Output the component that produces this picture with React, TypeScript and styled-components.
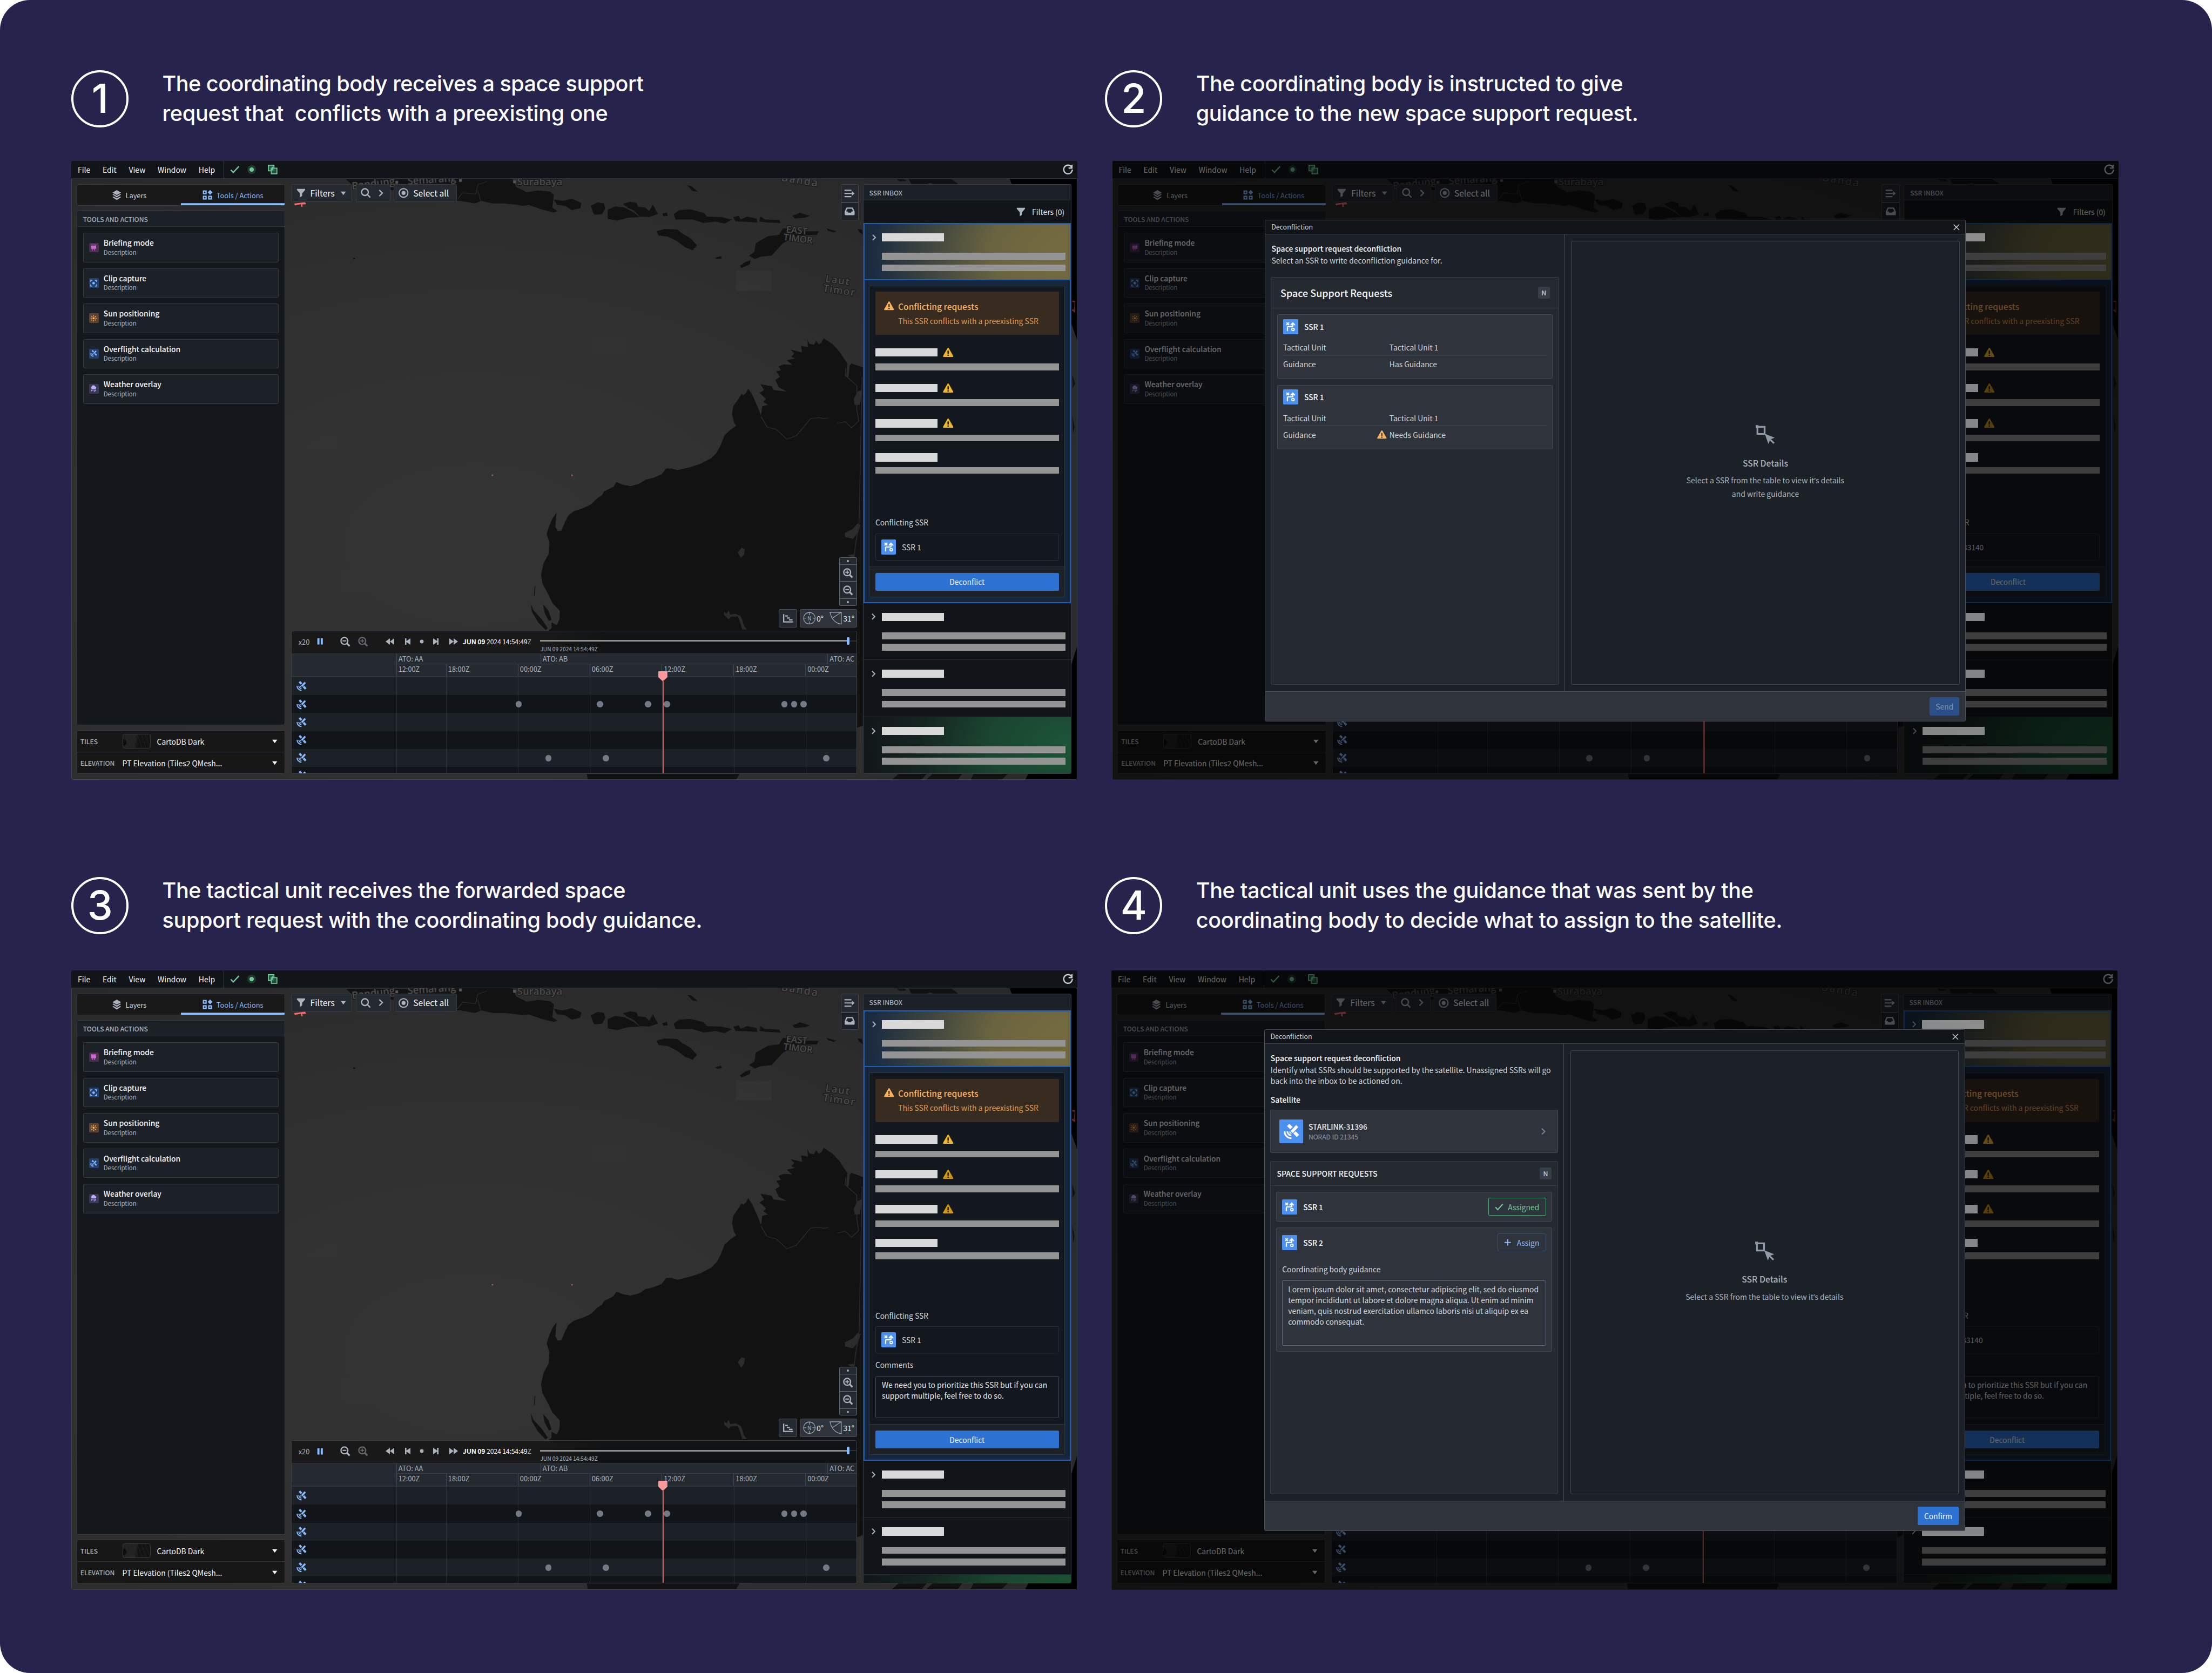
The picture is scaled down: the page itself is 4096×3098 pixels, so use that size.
import React from "react";
import styled, { createGlobalStyle, css } from "styled-components";

const SANS = '"Noto Sans CJK SC", "Noto Sans", sans-serif';
const DISPLAY = 'Inter, "Liberation Sans", sans-serif';

const Global = createGlobalStyle`
  html, body { margin: 0; padding: 0; background: #ffffff; }
  * { box-sizing: border-box; }
`;

/* ---------- Page ---------- */

const Page = styled.main`
  zoom: 0.84176;
  width: 4866px;
  height: 3680px;
  overflow: hidden;
  border-radius: 66px;
  background: #26244c;
  font-family: ${SANS};
  color: #f6f7f9;
  padding: 154px 0 0 157px;
  display: grid;
  grid-template-columns: 2213px 2213px;
  grid-template-rows: 1562px 1568px;
  column-gap: 77px;
  row-gap: 213px;
`;

const Step = styled.section<{ $nudge?: number }>`
  display: flex;
  flex-direction: column;
  justify-content: space-between;
  margin-left: ${(p) => p.$nudge ?? 0}px;
  width: 2213px;
`;

const StepHeader = styled.header<{ $shift?: number }>`
  display: flex;
  align-items: flex-start;
  gap: 74px;
  margin-left: ${(p) => p.$shift ?? 0}px;
`;

const StepNumber = styled.div`
  width: 126px;
  height: 126px;
  border: 5px solid #ffffff;
  border-radius: 50%;
  display: flex;
  align-items: center;
  justify-content: center;
  font: 500 89px/1 ${DISPLAY};
  color: #ffffff;
`;

const StepTitle = styled.h2`
  margin: -2px 0 0;
  font: 500 47px/65.3px ${DISPLAY};
  color: #ffffff;
  white-space: pre;
`;

const TitleLine = styled.span<{ $spacing: number }>`
  display: block;
  letter-spacing: ${(p) => p.$spacing}px;
`;

/* ---------- Window ---------- */

const Window = styled.div`
  position: relative;
  isolation: isolate;
  width: 2213px;
  height: 1362px;
  display: flex;
  flex-direction: column;
  overflow: hidden;
  border-radius: 4px;
  background: #000000;
  &::after {
    content: "";
    position: absolute;
    inset: 0;
    border: 1px solid rgba(90, 95, 105, 0.55);
    border-radius: 4px;
    pointer-events: none;
  }
`;

const MenuBar = styled.nav`
  position: relative;
  z-index: 1;
  height: 39px;
  flex: none;
  display: flex;
  align-items: center;
  background: #111418;
  border-bottom: 1.5px solid #2f343c;
  padding: 0 9px 0 14px;
  font-size: 16.6px;
`;

const MenuItems = styled.div`
  display: flex;
  gap: 27px;
  height: 100%;
  align-items: center;
  width: 322px;
  border-right: 1.5px solid #383e47;
`;

const StatusIcons = styled.div`
  display: flex;
  align-items: center;
  margin-left: 13px;
  color: #72ca9b;
`;

const LiveDot = styled.i`
  width: 19px;
  height: 19px;
  margin: 0 26px 0 17px;
  border-radius: 50%;
  background: radial-gradient(circle, #72ca9b 0 4.4px, #1f3b31 5px);
`;

const Push = styled.span`
  margin-left: auto;
  display: flex;
`;

const Refresh = styled(Push)`
  color: #c5cbd3;
`;

const Body = styled.div`
  position: relative;
  flex: 1;
  min-height: 0;
  display: flex;
  padding: 12.5px 13px 13.5px 11.5px;
`;

const MapCanvas = styled.svg`
  position: absolute;
  left: 0;
  top: -39px;
  width: 2213px;
  height: 1362px;
`;

const frame = css`
  border: 1.4px solid #383e47;
  border-radius: 3px;
`;

/* ---------- Left column ---------- */

const LeftColumn = styled.aside`
  position: relative;
  width: 459px;
  flex: none;
  display: flex;
  flex-direction: column;
  gap: 11px;
`;

const Tabs = styled.div`
  ${frame}
  height: 47px;
  display: flex;
  background: #191919;
  overflow: hidden;
`;

const Tab = styled.div<{ $active?: boolean }>`
  flex: 1;
  display: flex;
  align-items: center;
  justify-content: center;
  gap: 9px;
  font-size: 15.2px;
  color: ${(p) => (p.$active ? "#8abbff" : "#d3d8de")};
  box-shadow: ${(p) => (p.$active ? "inset 0 -4.5px 0 #8abbff" : "none")};
  svg { color: ${(p) => (p.$active ? "#8abbff" : "#abb3bf")}; }
`;

const ToolsPanel = styled.section`
  ${frame}
  flex: 1;
  background: #14171b;
`;

const PanelTitle = styled.h3`
  margin: 0;
  height: 34.5px;
  flex: none;
  padding: 0 13px;
  display: flex;
  align-items: center;
  background: #1c2127;
  border-bottom: 1.5px solid #2f343c;
  font-size: 14.3px;
  font-weight: 500;
  color: #abb3bf;
`;

const ToolList = styled.div`
  padding: 13px;
  display: flex;
  flex-direction: column;
  gap: 13px;
`;

const ToolCard = styled.div`
  ${frame}
  height: 64.8px;
  background: #1c2127;
  display: flex;
  align-items: center;
  padding-left: 12px;
  gap: 11px;
`;

const ToolTile = styled.span<{ $bg: string; $fg: string }>`
  width: 21px;
  height: 21px;
  border-radius: 2px;
  display: flex;
  align-items: center;
  justify-content: center;
  background: ${(p) => p.$bg};
  color: ${(p) => p.$fg};
`;

const ToolText = styled.div`
  display: flex;
  flex-direction: column;
`;

const ToolName = styled.b`
  font-size: 16.4px;
  line-height: 21px;
  font-weight: 500;
  color: #f6f7f9;
`;

const ToolNote = styled.span`
  font-size: 13.5px;
  line-height: 20px;
  color: #abb3bf;
`;

const Selects = styled.div`
  ${frame}
  height: 96px;
  background: #171717;
  display: flex;
  flex-direction: column;
`;

const SelectRow = styled.div`
  flex: 1;
  display: flex;
  align-items: center;
  padding: 0 14px 0 7px;
  font-size: 16.5px;
  & + & { border-top: 1.5px solid #2f343c; }
`;

const SelectLabel = styled.span`
  width: 92.5px;
  font-size: 14.3px;
  font-weight: 500;
  color: #abb3bf;
`;

const TileThumb = styled.i`
  width: 62px;
  height: 32px;
  margin-right: 14px;
  border: 1.4px solid #35383c;
  border-radius: 4px;
  background:
    radial-gradient(circle at 0 60%, #0e0e0e 7px, transparent 8px),
    repeating-linear-gradient(70deg, transparent 0 7px, rgba(40,40,40,.7) 7px 8px),
    linear-gradient(100deg, #222 45%, #131313 55%);
`;

/* ---------- Middle column ---------- */

const MiddleColumn = styled.div`
  position: relative;
  width: 1248.5px;
  flex: none;
  margin: 0 9px 0 13px;
  display: flex;
  flex-direction: column;
`;

const MapTop = styled.div`
  display: flex;
  align-items: flex-start;
  gap: 7.5px;
  flex: 1;
`;

const MapButton = styled.div<{ $w: number }>`
  ${frame}
  width: ${(p) => p.$w}px;
  height: 39px;
  background: #252a31;
  display: flex;
  align-items: center;
  padding-left: 10px;
  font-size: 18.6px;
  color: #f6f7f9;
  svg { color: #abb3bf; }
`;

const Gap = styled.i<{ $w: number }>`
  width: ${(p) => p.$w}px;
  flex: none;
`;

const Stack = styled.div<{ $w: number; $line?: string }>`
  border: 1.4px solid ${(p) => p.$line ?? "#404854"};
  border-radius: 3px;
  width: ${(p) => p.$w}px;
  display: flex;
  flex-direction: column;
  background: #252a31;
  color: #abb3bf;
`;

const StackCell = styled.div<{ $h: number; $line?: string; $dark?: boolean }>`
  height: ${(p) => p.$h}px;
  display: flex;
  align-items: center;
  justify-content: center;
  background: ${(p) => (p.$dark ? "#1c2127" : "transparent")};
  & + & { border-top: 1.4px solid ${(p) => p.$line ?? "#404854"}; }
`;

const Speck = styled.i`
  width: 4.5px;
  height: 4.5px;
  border-radius: 50%;
  background: #abb3bf;
`;

const ViewControls = styled.div<{ $my: number }>`
  display: flex;
  justify-content: flex-end;
  gap: 6.5px;
  margin: ${(p) => p.$my}px 4px ${(p) => p.$my}px 0;
`;

const ViewBox = styled.div<{ $w: number; $bg: string }>`
  border: 1.4px solid #4a505b;
  border-radius: 3px;
  width: ${(p) => p.$w}px;
  height: 40px;
  background: ${(p) => p.$bg};
  display: flex;
  align-items: center;
  color: #abb3bf;
  padding-left: 5px;
  font-size: 16.8px;
  span { color: #e5e8eb; }
`;

/* ---------- Timeline ---------- */

const Timeline = styled.section`
  width: 1244.5px;
  height: 315.5px;
  border: 1.4px solid #383e47;
  border-radius: 3px 3px 0 0;
  overflow: hidden;
  display: flex;
  flex-direction: column;
`;

const Playback = styled.div`
  height: 49px;
  flex: none;
  display: flex;
  align-items: center;
  padding: 0 0 2.5px 15px;
  background: linear-gradient(90deg, #191919 45%, #121314 55%);
  color: #abb3bf;
  font-size: 15.2px;
`;

const Tint = styled.span<{ $c?: string; $fade?: number }>`
  display: flex;
  color: ${(p) => p.$c ?? "inherit"};
  opacity: ${(p) => p.$fade ?? 1};
`;

const Clock = styled.span`
  width: 170.5px;
  flex: none;
  color: #f6f7f9;
  font-size: 14.6px;
  white-space: nowrap;
  letter-spacing: -0.2px;
  b { font-weight: 700; }
  i { font-style: normal; color: #abb3bf; }
`;

const Scrubber = styled.div`
  flex: 1;
  display: flex;
  flex-direction: column;
  padding-top: 14px;
  small { font-size: 12.1px; line-height: 16px; margin-top: 1px; }
`;

const Rail = styled.div`
  height: 17px;
  display: flex;
  align-items: center;
`;

const RailFill = styled.i`
  width: 674px;
  height: 3.6px;
  background: #8f8f8f;
`;

const RailThumb = styled.i`
  width: 6px;
  height: 17px;
  border-radius: 2px;
  background: #8abbff;
`;

const RailRest = styled.i`
  flex: 1;
  height: 3px;
  background: #2b2d30;
`;

const Lanes = styled.div`
  position: relative;
  flex: 1;
  min-height: 0;
`;

const LaneHead = styled.div`
  display: flex;
  height: 52.5px;
  background: #252a31;
  border-top: 1.5px solid #2f343c;
  border-bottom: 2.4px solid #2f343c;
  font-size: 15.2px;
  line-height: 22px;
  color: #abb3bf;
`;

const LaneHeadLabel = styled.div`
  width: 230px;
  flex: none;
`;

const LaneScale = styled.div`
  flex: 1;
  display: flex;
  flex-direction: column;
`;

const ScaleRow = styled.div<{ $h: number }>`
  display: flex;
  height: ${(p) => p.$h}px;
  & + & { border-top: 1.4px solid #383e47; }
`;

const ScaleCell = styled.div<{ $w: number }>`
  width: ${(p) => p.$w}px;
  flex: none;
  padding-left: 3.5px;
  border-left: 1.3px solid #434852;
`;

const Lane = styled.div<{ $alt?: boolean }>`
  height: 39.5px;
  display: flex;
  align-items: center;
  padding-left: 10px;
  color: #8abbff;
  background: ${(p) => (p.$alt ? "#111418" : "#1c2127")};
`;

const GridLine = styled.i`
  position: absolute;
  top: 52px;
  bottom: 0;
  width: 1.3px;
  background: rgba(95, 100, 110, 0.3);
`;

const Pass = styled.i`
  position: absolute;
  width: 13.6px;
  height: 13.6px;
  margin: -6.8px 0 0 -6.8px;
  border-radius: 50%;
  background: #747a85;
`;

const Playhead = styled.div`
  position: absolute;
  left: 807px;
  top: 39px;
  bottom: 0;
  width: 20px;
  display: flex;
  flex-direction: column;
  align-items: center;
  color: #fa999c;
  &::after {
    content: "";
    flex: 1;
    width: 2.5px;
    background: #cd5f62;
  }
`;

/* ---------- Inbox ---------- */

const Inbox = styled.aside`
  ${frame}
  position: relative;
  width: 459px;
  flex: none;
  display: flex;
  flex-direction: column;
  overflow: hidden;
  background: #111418;
`;

const InboxFilter = styled.div`
  height: 49.8px;
  flex: none;
  display: flex;
  align-items: center;
  justify-content: flex-end;
  gap: 15px;
  padding-right: 14px;
  font-size: 16.5px;
  color: #e5e8eb;
  svg { color: #abb3bf; }
`;

const RequestItem = styled.div<{ $tone?: "gold" | "green" }>`
  height: 125.4px;
  flex: none;
  display: flex;
  flex-direction: column;
  padding: 21px 12px 0 15px;
  color: #abb3bf;
  border-bottom: 1.5px solid #252a31;
  ${(p) =>
    p.$tone === "gold" &&
    css`
      padding: 20px 10px 0 13px;
      border: 2.4px solid #215db0;
      background: radial-gradient(ellipse 460px 300px at 100% 50%, #736a40 10%, #6a643f 38%, #3c443f 70%, #1a2b42 96%);
    `}
  ${(p) =>
    p.$tone === "green" &&
    css`background: radial-gradient(ellipse 460px 300px at 100% 50%, #1c5235 8%, #1a4530 40%, #152621 72%, #12181a 96%);`}
`;

const ItemHead = styled.div`
  display: flex;
  align-items: center;
  gap: 9.5px;
`;

const Bar = styled.i<{ $soft?: boolean; $ml?: number; $mt?: number; $lit?: boolean }>`
  display: block;
  flex: none;
  width: ${(p) => (p.$soft ? "auto" : "136.5px")};
  height: ${(p) => (p.$soft ? 15.2 : 18.2)}px;
  margin: ${(p) => p.$mt ?? 0}px 0 0 ${(p) => p.$ml ?? 0}px;
  background: ${(p) => (p.$soft ? "#949494" : "#d9d9d9")};
  ${(p) =>
    p.$lit &&
    css`
      position: relative;
      z-index: 3;
      opacity: 0.6;
    `}
`;

const Expanded = styled.div`
  flex: none;
  margin-top: -2.4px;
  background: #16273d;
  border: 2.4px solid #215db0;
  padding: 12px 10.5px 10.5px;
`;

const Detail = styled.div`
  border: 1.4px solid #2c3a4c;
  border-radius: 3px;
  background: #13181f;
`;

const DetailBody = styled.div`
  padding: 12.5px 12.5px 13px;
  display: flex;
  flex-direction: column;
`;

const Callout = styled.div`
  height: 95px;
  border-radius: 2px;
  background: #382b20;
  color: #fbb360;
  display: flex;
  gap: 9px;
  padding: 20px 0 0 19px;
`;

const CalloutText = styled.div`
  display: flex;
  flex-direction: column;
  b { font-size: 18.5px; line-height: 26px; font-weight: 500; }
  span { font-size: 16.6px; line-height: 36px; color: #e09c52; white-space: nowrap; }
`;

const FieldHead = styled.div<{ $mt: number }>`
  display: flex;
  align-items: center;
  gap: 12px;
  height: 18px;
  margin-top: ${(p) => p.$mt}px;
`;

const Label = styled.span<{ $mt: number }>`
  margin-top: ${(p) => p.$mt}px;
  font-size: 16.4px;
  line-height: 24px;
  color: #d3d8de;
`;

const BoxedRow = styled.div`
  height: 59.5px;
  margin-top: 12.5px;
  border: 1.4px solid #2a2f37;
  border-radius: 3px;
  display: flex;
  align-items: center;
  gap: 12.5px;
  padding-left: 11.5px;
  font-size: 16.4px;
  color: #d3d8de;
`;

const Comment = styled.p`
  margin: 12.5px 0 0;
  height: 93px;
  border: 1.4px solid #404854;
  border-radius: 3px;
  padding: 7.5px 13px;
  font-size: 16.5px;
  line-height: 23.6px;
  color: #e5e8eb;
  white-space: pre;
`;

const DetailFoot = styled.div`
  height: 66.5px;
  border-top: 1.5px solid #2f343c;
  background: #1c2127;
  padding: 12.5px 12.5px 0;
`;

const Primary = styled.div<{ $w?: number; $muted?: boolean }>`
  width: ${(p) => (p.$w ? p.$w + "px" : "100%")};
  height: 40px;
  border-radius: 3px;
  display: flex;
  align-items: center;
  justify-content: center;
  font-size: 16.4px;
  background: ${(p) => (p.$muted ? "#2b4f87" : "#2d72d2")};
  color: ${(p) => (p.$muted ? "#8494ad" : "#f6f7f9")};
`;

/* ---------- Dialog ---------- */

const Scrim = styled.div`
  position: absolute;
  z-index: 2;
  inset: 0;
  background: rgba(0, 0, 0, 0.58);
`;

const Dialog = styled.div`
  position: absolute;
  z-index: 4;
  left: 335.5px;
  top: 129px;
  width: 1542px;
  height: 1104.5px;
  display: flex;
  flex-direction: column;
  border: 1.4px solid #4a4f58;
  border-radius: 3px;
  background: #1c2127;
  overflow: hidden;
`;

const DialogTitle = styled.div`
  height: 31.5px;
  flex: none;
  display: flex;
  align-items: center;
  justify-content: space-between;
  padding: 0 12px 0 13px;
  background: #111418;
  border-bottom: 1.5px solid #404854;
  font-size: 14.8px;
  color: #d3d8de;
`;

const DialogMain = styled.div`
  flex: 1;
  min-height: 0;
  display: flex;
`;

const DialogLeft = styled.div`
  width: 658.5px;
  flex: none;
  border-right: 1.4px solid #404854;
  padding: 18.5px 11.5px 14px 12px;
  display: flex;
  flex-direction: column;
`;

const Lead = styled.b<{ $mt?: number }>`
  margin: ${(p) => p.$mt ?? 0}px 0 0 1.5px;
  font-size: 16.6px;
  font-weight: 500;
  line-height: 26px;
`;

const Copy = styled.span`
  margin-left: 1.5px;
  font-size: 16.55px;
  line-height: 24px;
  color: #d3d8de;
  white-space: pre;
`;

const Well = styled.div<{ $mt: number }>`
  border: 1.4px solid #383e47;
  border-radius: 3px;
  margin-top: ${(p) => p.$mt}px;
  flex: 1;
  background: #252a31;
`;

const WellHead = styled.div<{ $h: number; $size: number; $pl: number; $pr: number }>`
  height: ${(p) => p.$h}px;
  padding: 0 ${(p) => p.$pr}px 0 ${(p) => p.$pl}px;
  border-bottom: 1.5px solid #383e47;
  display: flex;
  align-items: center;
  justify-content: space-between;
  font-size: ${(p) => p.$size}px;
  font-weight: 500;
`;

const Badge = styled.span`
  width: 26.5px;
  height: 26.5px;
  border-radius: 3px;
  background: #383e47;
  display: flex;
  align-items: center;
  justify-content: center;
  font-size: 14.6px;
  font-weight: 500;
  color: #c5cbd3;
`;

const WellBody = styled.div`
  padding: 14px 12.5px;
  display: flex;
  flex-direction: column;
  gap: 13.5px;
`;

const SsrCard = styled.div<{ $h: number; $pad?: number }>`
  border: 1.4px solid #454b55;
  border-radius: 3px;
  height: ${(p) => p.$h}px;
  padding: ${(p) => p.$pad ?? 9}px 12px 0;
  background: #2f343c;
  display: flex;
  flex-direction: column;
`;

const SsrHead = styled.div`
  display: flex;
  align-items: center;
  gap: 13.5px;
  font-size: 16.4px;
  font-weight: 500;
`;

const PropRow = styled.div<{ $last?: boolean }>`
  display: flex;
  height: ${(p) => (p.$last ? 38 : 34)}px;
  align-items: center;
  font-size: 16.4px;
  color: #d3d8de;
  border-bottom: ${(p) => (p.$last ? "none" : "1.5px solid #4d535d")};
`;

const PropName = styled.span`
  width: 206.5px;
`;

const PropFlag = styled.span`
  width: 27.5px;
  display: flex;
`;

const Props = styled.div`
  margin-top: 13px;
`;

const Satellite = styled.div`
  height: 95px;
  margin-top: 8px;
  border: 1.4px solid #404854;
  border-radius: 3px;
  background: #2f343c;
  display: flex;
  align-items: center;
  padding: 0 22px 0 20px;
  gap: 11.5px;
  color: #738091;
`;

const SatelliteText = styled.div`
  flex: 1;
  display: flex;
  flex-direction: column;
  b { font-size: 16.5px; line-height: 24px; font-weight: 500; color: #e5e8eb; }
  span { font-size: 14.4px; line-height: 21px; color: #8f99a8; }
`;

const Outline = styled.span<{ $w: number; $fg: string; $line: string; $gap: number }>`
  margin-left: auto;
  width: ${(p) => p.$w}px;
  height: 39px;
  border: 1.4px solid ${(p) => p.$line};
  border-radius: 2px;
  display: flex;
  align-items: center;
  justify-content: center;
  gap: ${(p) => p.$gap}px;
  font-weight: 400;
  color: ${(p) => p.$fg};
`;

const Guidance = styled.p`
  margin: 12.5px 0 0;
  height: 144.5px;
  border: 1.4px solid #5f6b7c;
  border-radius: 3px;
  padding: 8px 12px;
  font-size: 16.5px;
  line-height: 23.7px;
  color: #d3d8de;
  white-space: pre;
`;

const DialogRight = styled.div`
  flex: 1;
  padding: 14px 12.5px 14px 14px;
  display: flex;
`;

const EmptyState = styled.div`
  flex: 1;
  border: 1.4px solid #404854;
  border-radius: 3px;
  display: flex;
  flex-direction: column;
  align-items: center;
  justify-content: center;
  color: #8f99a8;
  b { font-size: 18.7px; line-height: 28px; font-weight: 500; margin: 28px 0 9px; color: #abb3bf; }
`;

const EmptyNote = styled.span`
  font-size: 16.6px;
  line-height: 28.6px;
  color: #abb3bf;
  text-align: center;
  white-space: pre;
`;

const Apostrophe = styled.span`
  font-family: "Noto Sans", sans-serif;
`;

const DialogFoot = styled.div`
  height: 66px;
  flex: none;
  background: #2f343c;
  border-top: 1.5px solid #4a4f58;
  display: flex;
  align-items: center;
  justify-content: flex-end;
  padding-right: 13px;
`;

const BlueTile = styled.span<{ $s: number }>`
  width: ${(p) => p.$s}px;
  height: ${(p) => p.$s}px;
  flex: none;
  border-radius: 2px;
  background: #4c90f0;
  color: #ffffff;
  display: flex;
  align-items: center;
  justify-content: center;
`;

/* ---------- Icons (16 unit grid) ---------- */

const Glyph = styled.svg<{ $s: number }>`
  width: ${(p) => p.$s}px;
  height: ${(p) => p.$s}px;
  flex: none;
  display: block;
  fill: currentColor;
`;

type IconName =
  | "layers" | "grid" | "filter" | "caret" | "search" | "zoomIn" | "zoomOut" | "chevron"
  | "target" | "menuOpen" | "inbox" | "refresh" | "tick" | "link" | "pause" | "rewind"
  | "prev" | "next" | "forward" | "dot" | "gantt" | "warn" | "route" | "satellite"
  | "board" | "capture" | "sun" | "rain" | "cross" | "plus" | "pick" | "marker";

const line = (w: number) => ({ fill: "none", stroke: "currentColor", strokeWidth: w });

const shapes: Record<IconName, React.ReactNode> = {
  layers: (
    <>
      <path d="M8 0 15 4 8 8 1 4z" />
      <path d="M1 7.2 2.8 6.3 8 9.2l5.2-2.9 1.8.9L8 11.9z" />
      <path d="M1 11.2l1.8-.9L8 13.2l5.2-2.9 1.8.9L8 15.9z" />
    </>
  ),
  grid: (
    <>
      <g {...line(2)}>
        <rect x="1.5" y="1.5" width="4.2" height="4.2" />
        <rect x="1.5" y="10" width="4.2" height="4.2" />
        <rect x="10" y="10" width="4.2" height="4.2" />
      </g>
      <path d="M12.1-.3 15.9 3.6 12.1 7.5 8.3 3.6z" />
    </>
  ),
  filter: <path d="M.8.8h14.4v1.8L10 8.6V13l-4 2.6V8.6L.8 2.6z" />,
  caret: <path d="M2.5 4.5h11L8 12.3z" />,
  search: <g {...line(2)}><circle cx="6.7" cy="6.7" r="5.4" /><path d="M10.8 10.8 15.2 15.2" /></g>,
  zoomIn: <g {...line(2)}><circle cx="6.7" cy="6.7" r="5.5" /><path d="M10.8 10.8 15 15" strokeWidth="2.8" /><path d="M3.7 6.7h6M6.7 3.7v6" strokeWidth="1.7" /></g>,
  zoomOut: <g {...line(2)}><circle cx="6.7" cy="6.7" r="5.5" /><path d="M10.8 10.8 15 15" strokeWidth="2.8" /><path d="M3.7 6.7h6" strokeWidth="1.8" /></g>,
  chevron: <path d="M4.6 2 10.6 8 4.6 14" {...line(2.4)} />,
  target: <><circle cx="8" cy="8" r="7" {...line(1.7)} /><circle cx="8" cy="8" r="3.2" /></>,
  menuOpen: <><path d="M.5 3h9.6M.5 8H11M.5 13h9.6" {...line(1.9)} strokeLinecap="round" /><path d="M11.6 4.3 16 8l-4.4 3.7z" /></>,
  inbox: <path fillRule="evenodd" d="M3.6 2h8.8q.8 0 1.1.8L16 8.6V13q0 1.2-1.2 1.2H1.2Q0 14.2 0 13V8.6L2.5 2.8Q2.8 2 3.6 2zM4.2 3.9 2.4 8.2h2.2l1.2 2h4.4l1.2-2h2.2l-1.8-4.3z" />,
  refresh: <><path d="M13.4 4.3A6.6 6.6 0 1 0 14.6 8.3" {...line(2)} /><path d="M14 .8v5.2H8.9" {...line(1.9)} /></>,
  tick: <path d="M1.2 8.6 5.4 13 14.8 2.8" {...line(2.1)} />,
  link: <><path d="M.8.8h9.4v9.4H.8z" fill="#245a43" stroke="currentColor" strokeWidth="1.6" /><path d="M5.8 5.8h9.4v9.4H5.8z" fill="#245a43" fillOpacity=".8" stroke="currentColor" strokeWidth="1.6" /><path d="M7.8 3.5v5H5" {...line(1.5)} /></>,
  pause: <path d="M2 1h4.6v14H2zM9.4 1H14v14H9.4z" />,
  rewind: <path d="M8 2v12L0 8zM16 2v12L8 8z" />,
  forward: <path d="M0 2v12l8-6zM8 2v12l8-6z" />,
  prev: <path d="M3 2h2.6v5L13 2v12L5.6 9v5H3z" />,
  next: <path d="M13 2h-2.6v5L3 2v12l7.4-5v5H13z" />,
  dot: <circle cx="8" cy="8" r="3.4" />,
  gantt: <path d="M0 1h2v11.5h14v2H0zM3.5 3h4.2v2H3.5zM6.2 6.2h4.6v2H6.2zM9.5 9.3h5.7v2H9.5z" />,
  warn: <path fillRule="evenodd" d="M8 .8q.6 0 .9.5l6.9 12.2q.5 1.2-.8 1.3H1q-1.3-.1-.8-1.3L7.1 1.3Q7.4.8 8 .8zM7 5.2v5h2v-5zM7 11.3v2h2v-2z" />,
  route: (
    <>
      <path d="M1 1.2 5.4 5.2M5.4 1.2 1 5.2" {...line(1.9)} />
      <path d="M2.7 15.2V9.3q0-1.2 1.2-1.2h6.3q1.5 0 1.5-1.5V2.5" {...line(2)} />
      <path d="M8.2 5.4 11.7 1.7 15.2 5.4" {...line(2)} />
      <circle cx="12" cy="12.6" r="2.1" {...line(1.7)} />
    </>
  ),
  satellite: (
    <>
      <path d="M8.3 8.6 14 2.3" {...line(3)} />
      <path d="M4.7 1.2 8 4.6" {...line(3.4)} />
      <path d="M11.2 8.8 14.8 12.6" {...line(3.4)} />
      <path d="M1 7.8A7 7 0 0 0 8 15M3.8 7.8A4.2 4.2 0 0 0 8 12" {...line(1.7)} />
      <path d="M6 7.6 8.4 10H6.6L6 9.4z" />
    </>
  ),
  board: <><path d="M1.2 1.5h13.6V3H1.2zM2 3.8h12v7.4H2z" /><path d="M6.5 11.5 4.8 15M9.5 11.5l1.7 3.5" {...line(1.6)} /></>,
  capture: <><path d="M1.2 5V1.2H5M11 1.2h3.8V5M14.8 11v3.8H11M5 14.8H1.2V11" {...line(2)} /><circle cx="8" cy="8" r="3" /></>,
  sun: <><circle cx="8" cy="8" r="2.5" /><path d="M8 .8v3M8 12.2v3M.8 8h3M12.2 8h3M2.9 2.9 5 5M11 11l2.1 2.1M13.1 2.9 11 5M5 11l-2.1 2.1" {...line(1.7)} /></>,
  rain: <><path d="M4 7.8A3 3 0 0 1 3.6 2.3 4.3 4.3 0 0 1 11.6 2a3 3 0 0 1 .6 5.8z" /><path d="M3.5 9.5v3.5M6.5 9.5v2.5M9.5 9.5V15M12.5 9.5V13" {...line(1.7)} /></>,
  cross: <path d="M2 2 14 14M14 2 2 14" {...line(1.6)} />,
  plus: <path d="M8 1v14M1 8h14" {...line(2.2)} />,
  pick: (
    <>
      <path d="M1.500 1.500h6v6h-6z" {...line(1.500)} />
      <path d="M0 .1h2.400v2.400H0z" />
      <path d="M7.600 7.400 16 10.600 12.900 11.900 15.900 14.800 14.900 15.900 11.900 12.900 10.700 16z" />
    </>
  ),
  marker: <path d="M0 1Q0 0 1 0h14q1 0 1 1v9.5L8 18 0 10.5z" />,
};

const Icon = ({ name, size }: { name: IconName; size: number }) => (
  <Glyph $s={size} viewBox="0 0 16 16" overflow="visible">{shapes[name]}</Glyph>
);

/* ---------- Map ---------- */

const MapLabel = styled.text`
  font-family: "Open Sans", "Noto Sans", sans-serif;
  font-weight: 600;
  fill: #4b4b4b;
  stroke: #1a1a1a;
  stroke-width: 3px;
  paint-order: stroke;
`;

const MAINLAND =
  "M1545 660 1512 645 1505 655 1498 640 1480 605 1462 580 1438 560 1432 575 1425 580 1418 568 1412 582 1400 578 1395 565 1396 590 1378 585 1381 608 1350 598 1360 612 1352 622 1362 628 1340 634 1355 650 1332 648 1318 655 1325 668 1312 672 1322 690 1310 700 1318 725 1340 740 1305 735 1300 722 1270 715 1280 735 1268 745 1285 765 1278 775 1290 785 1275 790 1272 820 1262 790 1250 755 1238 730 1232 745 1225 752 1220 748 1210 768 1198 790 1195 815 1200 845 1206 856 1190 870 1175 888 1165 920 1155 945 1140 965 1110 985 1085 995 1050 1006 1035 1000 1020 1000 1008 1020 985 1032 965 1038 948 1052 925 1060 905 1055 888 1046 880 1062 855 1078 850 1090 838 1100 820 1122 800 1134 775 1145 760 1160 752 1180 742 1210 733 1212 726 1198 729 1150 718 1170 708 1200 703 1222 710 1250 708 1290 695 1320 688 1360 692 1390 705 1420 718 1455 738 1482 737 1510 730 1530 716 1520 716 1540 708 1548 760 1700 812 2052 1206 2052 1227 2005 1537 1872 1640 1805 1975 1036z";

const ISLANDS = [
  "M170 22 190 45 300 60 440 95 475 95 512 104 530 95 560 104 590 104 622 108 640 112 655 109 690 124 722 134 732 130 718 118 722 75 712 64 680 60 650 66 622 48 612 20 430 20 400 22z",
  "M722 90 745 95 770 88 795 102 792 120 770 126 752 112 730 108z",
  "M820 112 838 100 855 104 858 122 850 140 830 142 826 135z",
  "M865 125 885 114 910 118 935 135 950 150 920 152 890 162 865 156z",
  "M905 105 925 98 942 102 945 115 965 118 975 130 985 108 992 125 998 140 975 150 950 148 935 128 918 118z",
  "M1010 138 1022 134 1024 146 1012 147z",
  "M1040 140 1055 126 1085 124 1120 136 1128 148 1165 150 1195 158 1175 172 1150 165 1120 170 1090 158 1045 158z",
  "M1198 150 1212 146 1218 158 1235 148 1260 155 1262 168 1232 166 1204 164z",
  "M1270 148 1282 158 1320 160 1324 170 1290 168 1268 165z",
  "M1355 146 1375 136 1402 146 1388 152 1362 155z",
  "M994 198 1015 190 1050 192 1062 205 1085 222 1102 246 1090 262 1070 252 1050 232 1025 216 1000 212z",
  "M1150 288 1165 282 1168 290 1156 293z",
  "M1254 268 1258 238 1290 215 1320 210 1330 188 1350 190 1380 198 1425 198 1420 210 1370 212 1330 238 1300 280 1270 284 1255 292 1240 280z",
  "M1216 315 1230 302 1244 296 1242 310 1220 322z",
  "M1076 42 1086 44 1104 64 1090 62z",
  "M1445 188 1472 198 1465 202 1450 196z",
  "M1528 190 1540 192 1542 210 1532 200z",
  "M188 290 192 287 196 291 192 294z",
];

const MapArt = () => (
  <MapCanvas viewBox="0 0 2213 1362">
    <defs>
      <radialGradient id="ocean" cx="0.4" cy="0.62" r="0.72">
        <stop offset="0" stopColor="#343434" />
        <stop offset="0.55" stopColor="#303030" />
        <stop offset="1" stopColor="#292929" />
      </radialGradient>
    </defs>
    <path d="M0 0H2050L2070 55C2150 180 2180 280 2200 358L2213 395V1066L2200 1108 2175 1220 2098 1362H0z" fill="url(#ocean)" />
    <g fill="#121212" transform="translate(463 26) scale(0.829 0.6505)">
      <path d={MAINLAND} />
      {ISLANDS.map((d) => <path key={d} d={d} />)}
      <path d="M661 1457 668 1480 690 1510 706 1540 700 1546 680 1520 664 1485z" />
      <path d="M693 1459 708 1482 716 1512 709 1516 698 1490z" />
      <path d="M673 1398 671 1430 669 1432 671 1400z" />
      <g fill="#2c2c2c">
        <path d="M1210 1285 1220 1268 1229 1272 1227 1290 1219 1304z" />
        <path d="M1494 1218 1515 1205 1528 1186 1536 1190 1530 1215 1516 1238 1495 1232z" />
        <path d="M1500 1293 1520 1290 1520 1304z" />
        <path d="M1528 740 1540 735 1534 785 1520 785 1518 765z" />
        <path d="M1498 690 1500 645 1507 655 1504 690z" />
      </g>
      <g fill="none" stroke="#2a2a2a" strokeWidth="2.4">
        <path d="M1272 825 1288 860 1312 868 1340 901 1365 890 1403 832 1425 828 1437 832 1452 829M1474 848 1495 842 1512 862 1531 840 1526 800 1526 720 1510 702 1495 685 1497 660M1540 690 1532 1180 1518 1300" />
      </g>
      <path d="M1174 1484 1180 1492 1186 1480 1190 1494 1205 1492 1218 1500 1222 1512 1226 1530 1234 1545 1222 1545 1216 1520 1210 1500 1192 1502 1186 1510 1174 1496z" fill="#2c2c2c" />
      <path d="M466 90 480 68 515 72 520 40 545 30M520 60 528 96" fill="none" stroke="#2b2b2b" strokeWidth="2" />
    </g>
    <g fill="#ffffff" fillOpacity="0.008">
      <rect x="1462" y="242" width="79" height="44" fillOpacity="0.028" />
      <rect x="1146" y="380" width="79" height="44" />
      <rect x="511" y="597" width="79" height="42" />
      <rect x="596" y="903" width="79" height="44" />
    </g>
    <g fill="#111111">
      <path d="M1816 40H1832L1838 44 1822 45zM1842 40H1936L1958 56H1905L1890 48 1868 56 1850 54z" />
      <path d="M1820 1348H1882L1870 1362H1805zM1895 1348 1960 1348 1950 1362H1880zM1985 1348H2060L2046 1362H1978z" />
      <path d="M2202 560 2207 585 2204 600zM2202 470l6 20-5 10z" />
    </g>
    <g fill="#cd4246">
      <path d="M490 94 514 91 517 95 508 96 509 101 506 101 505 95 492 98z" fill="#fa6a6e" />
      <rect x="925" y="690" width="3" height="3" fill="#a86060" />
      <rect x="1100" y="690" width="3" height="3" fill="#a86060" />
      <path d="M2201 329l3-4 2 4 1-18-5-1v-3l6 1v26z" fillOpacity="0.55" />
    </g>
    <MapLabel transform="translate(618 63) rotate(-7)" fontSize="22">Bandung</MapLabel>
    <MapLabel transform="translate(740 52) rotate(-4)" fontSize="22">Semarang</MapLabel>
    <MapLabel transform="translate(981 54)" fontSize="22">Surabaya</MapLabel>
    <MapLabel transform="translate(1561 44) rotate(9)" fontSize="23" letterSpacing="2.5">Banda</MapLabel>
    <MapLabel transform="translate(1572 157) rotate(6)" fontSize="20">EAST</MapLabel>
    <MapLabel transform="translate(1566 174) rotate(7)" fontSize="20">TIMOR</MapLabel>
    <MapLabel transform="translate(1658 266) rotate(8)" fontSize="22" letterSpacing="2">Laut</MapLabel>
    <MapLabel transform="translate(1653 287) rotate(8)" fontSize="22" letterSpacing="2">Timor</MapLabel>
    <g fill="#565656">
      <rect x="713" y="44" width="6" height="6" />
      <rect x="853" y="40" width="6" height="6" />
      <rect x="972" y="43" width="6" height="6" />
    </g>
  </MapCanvas>
);

/* ---------- Window parts ---------- */

const TOOLS: { name: string; icon: IconName; bg: string; fg: string }[] = [
  { name: "Briefing mode", icon: "board", bg: "#4a2f50", fg: "#d069d6" },
  { name: "Clip capture", icon: "capture", bg: "#24406f", fg: "#8abbff" },
  { name: "Sun positioning", icon: "sun", bg: "#5c4430", fg: "#fbb360" },
  { name: "Overflight calculation", icon: "satellite", bg: "#24406f", fg: "#8abbff" },
  { name: "Weather overlay", icon: "rain", bg: "#3a3856", fg: "#bdadff" },
];

const TICKS = [230.5, 340, 498, 656, 814.5, 972.5, 1130.5];
const TICK_NAMES = ["12:00Z", "18:00Z", "00:00Z", "06:00Z", "12:00Z", "18:00Z", "00:00Z"];
const PASSES: [number, number][] = [
  [499.3, 1], [678.2, 1], [783.8, 1], [825.5, 1], [1084, 1], [1105, 1], [1126, 1],
  [564.5, 4], [691.2, 4], [1176, 4],
];

const LeftPane = () => (
  <LeftColumn>
    <Tabs>
      <Tab><Icon name="layers" size={22} />Layers</Tab>
      <Tab $active><Icon name="grid" size={22} />Tools / Actions</Tab>
    </Tabs>
    <ToolsPanel>
      <PanelTitle>TOOLS AND ACTIONS</PanelTitle>
      <ToolList>
        {TOOLS.map((t) => (
          <ToolCard key={t.name}>
            <ToolTile $bg={t.bg} $fg={t.fg}><Icon name={t.icon} size={15} /></ToolTile>
            <ToolText>
              <ToolName>{t.name}</ToolName>
              <ToolNote>Description</ToolNote>
            </ToolText>
          </ToolCard>
        ))}
      </ToolList>
    </ToolsPanel>
    <Selects>
      <SelectRow>
        <SelectLabel>TILES</SelectLabel>
        <TileThumb />
        CartoDB Dark
        <Push><Icon name="caret" size={16} /></Push>
      </SelectRow>
      <SelectRow>
        <SelectLabel>ELEVATION</SelectLabel>
        PT Elevation (Tiles2 QMesh...
        <Push><Icon name="caret" size={16} /></Push>
      </SelectRow>
    </Selects>
  </LeftColumn>
);

const TimelinePane = () => (
  <Timeline>
    <Playback>
      x20<Gap $w={15} /><Tint $c="#8abbff"><Icon name="pause" size={16} /></Tint>
      <Gap $w={36} /><Icon name="zoomOut" size={22} />
      <Gap $w={18} /><Tint $fade={0.5}><Icon name="zoomIn" size={22} /></Tint>
      <Gap $w={38} /><Icon name="rewind" size={19} />
      <Gap $w={20} /><Icon name="prev" size={19} />
      <Gap $w={12} /><Icon name="dot" size={19} />
      <Gap $w={12} /><Icon name="next" size={19} />
      <Gap $w={21} /><Icon name="forward" size={19} />
      <Gap $w={10} />
      <Clock><b>JUN 09</b> 2024 14:54:49<i>Z</i></Clock>
      <Scrubber>
        <Rail><RailFill /><RailThumb /><RailRest /></Rail>
        <small>JUN 09 2024 14:54:49Z</small>
      </Scrubber>
    </Playback>
    <Lanes>
      <LaneHead>
        <LaneHeadLabel />
        <LaneScale>
          <ScaleRow $h={22}>
            <ScaleCell $w={317.4}>ATO: AA</ScaleCell>
            <ScaleCell $w={631.3}>ATO: AB</ScaleCell>
            <ScaleCell $w={66}>ATO: AC</ScaleCell>
          </ScaleRow>
          <ScaleRow $h={28}>
            {TICKS.map((x, i) => (
              <ScaleCell key={x} $w={(TICKS[i + 1] ?? 1245) - x}>{TICK_NAMES[i]}</ScaleCell>
            ))}
          </ScaleRow>
        </LaneScale>
      </LaneHead>
      {[0, 1, 2, 3, 4, 5].map((i) => (
        <Lane key={i} $alt={i % 2 === 1}><Icon name="satellite" size={22} /></Lane>
      ))}
      {TICKS.map((x) => <GridLine key={x} style={{ left: x }} />)}
      {PASSES.map(([x, lane]) => (
        <Pass key={`${x}-${lane}`} style={{ left: x, top: 52.5 + 39.5 * lane + 20 }} />
      ))}
      <Playhead><Icon name="marker" size={20} /></Playhead>
    </Lanes>
  </Timeline>
);

const MapPane = () => (
  <MiddleColumn>
    <MapTop>
      <MapButton $w={134.5}>
        <Icon name="filter" size={20} /><Gap $w={11} />Filters<Gap $w={11} /><Icon name="caret" size={16} />
      </MapButton>
      <MapButton $w={76}><Icon name="search" size={22} /><Gap $w={14} /><Icon name="chevron" size={18} /></MapButton>
      <MapButton $w={138.5}><Icon name="target" size={22} /><Gap $w={10} />Select all</MapButton>
      <Push>
        <Stack $w={39.5}>
          <StackCell $h={38.5}><Icon name="menuOpen" size={22} /></StackCell>
          <StackCell $h={38.5} $dark><Icon name="inbox" size={22} /></StackCell>
        </Stack>
      </Push>
    </MapTop>
    <ViewControls $my={0}>
      <Stack $w={39} $line="#5f646d">
        <StackCell $h={14}><Speck /></StackCell>
        <StackCell $h={38} $line="#5f646d"><Icon name="zoomIn" size={22} /></StackCell>
        <StackCell $h={38} $line="#5f646d"><Icon name="zoomOut" size={22} /></StackCell>
        <StackCell $h={15} $line="#5f646d"><Speck /></StackCell>
      </Stack>
    </ViewControls>
    <ViewControls $my={7}>
      <ViewBox $w={40} $bg="#252a31"><Gap $w={3} /><Icon name="gantt" size={22} /></ViewBox>
      <ViewBox $w={125} $bg="#2f343c">
        <Glyph $s={28} viewBox="0 0 28 28">
          <circle cx="14" cy="14" r="12.7" fill="none" stroke="currentColor" strokeWidth="1.3" />
          <path d="M14 1v6M14 21v6M1 14h6M21 14h6" stroke="currentColor" strokeWidth="1.3" />
          <text x="14" y="18.5" textAnchor="middle" fontSize="12.5" fontFamily={SANS}>N</text>
        </Glyph>
        <Gap $w={2} /><span>0°</span><Gap $w={13} />
        <Glyph $s={28} viewBox="0 0 28 28">
          <path d="M1 1H26V27Q6 24 1 1zM6 14 26 1" fill="none" stroke="currentColor" strokeWidth="1.3" />
        </Glyph>
        <Gap $w={2} /><span>31°</span>
      </ViewBox>
    </ViewControls>
    <TimelinePane />
  </MiddleColumn>
);

const Request = ({ tone, lit }: { tone?: "gold" | "green"; lit?: boolean }) => (
  <RequestItem $tone={tone}>
    <ItemHead><Icon name="chevron" size={16} /><Bar $lit={lit} /></ItemHead>
    <Bar $soft $ml={25.5} $mt={25} />
    <Bar $soft $ml={25.5} $mt={10} />
  </RequestItem>
);

type InboxProps = { filters?: boolean; comments?: boolean; code?: string };

const WARN_TONES = ["#f0b726", "#f0b726", "#f0b726"];
const WARN_TONES_DEEP = ["#f0b726", "#d1980b", "#d1980b"];

const InboxPane = ({ filters, comments, code }: InboxProps) => {
  const lit = Boolean(code);
  const pitch = comments ? 28 : 29.4;
  return (
    <Inbox>
      <PanelTitle>SSR INBOX</PanelTitle>
      {filters && <InboxFilter><Icon name="filter" size={20} />Filters (0)</InboxFilter>}
      <Request tone="gold" lit={lit} />
      <Expanded>
        <Detail>
          <DetailBody>
            <Callout>
              <Icon name="warn" size={22} />
              <CalloutText>
                <b>Conflicting requests</b>
                <span>This SSR conflicts with a preexisting SSR</span>
              </CalloutText>
            </Callout>
            {(comments || lit ? WARN_TONES_DEEP : WARN_TONES).map((c, i) => (
              <React.Fragment key={i}>
                <FieldHead $mt={i ? pitch : 29.4}><Bar $lit={lit} /><Tint $c={c}><Icon name="warn" size={23} /></Tint></FieldHead>
                <Bar $soft $mt={15.5} />
              </React.Fragment>
            ))}
            <FieldHead $mt={26}><Bar $lit={lit} /></FieldHead>
            <Bar $soft $mt={12} />
            <Label $mt={comments ? 110.8 : 95}>Conflicting SSR</Label>
            <BoxedRow>
              <BlueTile $s={33}><Icon name="route" size={21} /></BlueTile>
              {code ? <><Gap $w={32} />{code}</> : "SSR 1"}
            </BoxedRow>
            {comments && (
              <>
                <Label $mt={13}>Comments</Label>
                <Comment>{"We need you to prioritize this SSR but if you can\nsupport multiple, feel free to do so."}</Comment>
              </>
            )}
          </DetailBody>
          <DetailFoot><Primary>Deconflict</Primary></DetailFoot>
        </Detail>
      </Expanded>
      <Request lit={lit} />
      <Request lit={lit} />
      <Request tone="green" lit={lit} />
    </Inbox>
  );
};

const AppWindow = ({ children, ...inbox }: InboxProps & { children?: React.ReactNode }) => (
  <Window>
    <MenuBar>
      <MenuItems>
        {["File", "Edit", "View", "Window", "Help"].map((m) => <span key={m}>{m}</span>)}
      </MenuItems>
      <StatusIcons>
        <Icon name="tick" size={21} />
        <LiveDot />
        <Icon name="link" size={21} />
      </StatusIcons>
      <Refresh><Icon name="refresh" size={23} /></Refresh>
    </MenuBar>
    <Body>
      <MapArt />
      <LeftPane />
      <MapPane />
      <InboxPane {...inbox} />
    </Body>
    {children}
  </Window>
);

/* ---------- Dialogs ---------- */

type ShellProps = { left: React.ReactNode; noteEnd?: string; action: React.ReactNode };

const DialogShell = ({ left, noteEnd = "", action }: ShellProps) => (
  <>
    <Scrim />
    <Dialog>
      <DialogTitle>Deconfliction<Icon name="cross" size={16} /></DialogTitle>
      <DialogMain>
        <DialogLeft>{left}</DialogLeft>
        <DialogRight>
          <EmptyState>
            <Icon name="pick" size={42} />
            <b>SSR Details</b>
            <EmptyNote>Select a SSR from the table to view it<Apostrophe>’</Apostrophe>s details{noteEnd}</EmptyNote>
          </EmptyState>
        </DialogRight>
      </DialogMain>
      <DialogFoot>{action}</DialogFoot>
    </Dialog>
  </>
);

const GuidanceCard = ({ needs }: { needs?: boolean }) => (
  <SsrCard $h={141.5}>
    <SsrHead><BlueTile $s={33}><Icon name="route" size={21} /></BlueTile>SSR 1</SsrHead>
    <Props>
      <PropRow><PropName>Tactical Unit</PropName><PropFlag />Tactical Unit 1</PropRow>
      <PropRow $last>
        <PropName>Guidance</PropName>
        <PropFlag><Tint $c="#fbb360">{needs && <Icon name="warn" size={21} />}</Tint></PropFlag>
        {needs ? "Needs Guidance" : "Has Guidance"}
      </PropRow>
    </Props>
  </SsrCard>
);

const GuidanceDialog = () => (
  <DialogShell
    noteEnd={"\nand write guidance"}
    action={<Primary $w={65.5} $muted>Send</Primary>}
    left={
      <>
        <Lead>Space support request deconfliction</Lead>
        <Copy>Select an SSR to write deconfliction guidance for.</Copy>
        <Well $mt={25.5}>
          <WellHead $h={67} $size={21.3} $pl={20} $pr={19}>Space Support Requests<Badge>N</Badge></WellHead>
          <WellBody>
            <GuidanceCard />
            <GuidanceCard needs />
          </WellBody>
        </Well>
      </>
    }
  />
);

const AssignDialog = () => (
  <DialogShell
    action={<Primary $w={89.5}>Confirm</Primary>}
    left={
      <>
        <Lead>Space support request deconfliction</Lead>
        <Copy>{"Identify what SSRs should be supported by the satellite. Unassigned SSRs will go\nback into the inbox to be actioned on."}</Copy>
        <Lead $mt={18}>Satellite</Lead>
        <Satellite>
          <BlueTile $s={52}><Icon name="satellite" size={34} /></BlueTile>
          <SatelliteText>
            <b>STARLINK-31396</b>
            <span>NORAD ID 21345</span>
          </SatelliteText>
          <Icon name="chevron" size={17} />
        </Satellite>
        <Well $mt={18}>
          <WellHead $h={53} $size={16.7} $pl={14} $pr={13}>SPACE SUPPORT REQUESTS<Badge>N</Badge></WellHead>
          <WellBody>
            <SsrCard $h={65} $pad={12}>
              <SsrHead>
                <BlueTile $s={33}><Icon name="route" size={21} /></BlueTile>SSR 1
                <Outline $w={127} $fg="#72ca9b" $line="#4ea878" $gap={10}><Icon name="tick" size={19} />Assigned</Outline>
              </SsrHead>
            </SsrCard>
            <SsrCard $h={273} $pad={12}>
              <SsrHead>
                <BlueTile $s={33}><Icon name="route" size={21} /></BlueTile>SSR 2
                <Outline $w={106.5} $fg="#8abbff" $line="#3b4d68" $gap={12}><Icon name="plus" size={16} />Assign</Outline>
              </SsrHead>
              <Label $mt={27}>Coordinating body guidance</Label>
              <Guidance>{"Lorem ipsum dolor sit amet, consectetur adipiscing elit, sed do eiusmod\ntempor incididunt ut labore et dolore magna aliqua. Ut enim ad minim\nveniam, quis nostrud exercitation ullamco laboris nisi ut aliquip ex ea\ncommodo consequat."}</Guidance>
            </SsrCard>
          </WellBody>
        </Well>
      </>
    }
  />
);

const Heading = ({ n, lines, shift }: { n: number; lines: [string, number][]; shift?: number }) => (
  <StepHeader $shift={shift}>
    <StepNumber>{n}</StepNumber>
    <StepTitle>
      {lines.map(([text, spacing]) => <TitleLine key={text} $spacing={spacing}>{text}</TitleLine>)}
    </StepTitle>
  </StepHeader>
);

export default function App() {
  return (
    <>
      <Global />
      <Page>
        <Step>
          <Heading
            n={1}
            lines={[
              ["The coordinating body receives a space support", -0.6],
              ["request that  conflicts with a preexisting one", -0.3],
            ]}
          />
          <AppWindow filters />
        </Step>
        <Step>
          <Heading
            n={2}
            shift={-16}
            lines={[
              ["The coordinating body is instructed to give", -0.5],
              ["guidance to the new space support request.", -0.4],
            ]}
          />
          <AppWindow filters code="33140"><GuidanceDialog /></AppWindow>
        </Step>
        <Step>
          <Heading
            n={3}
            lines={[
              ["The tactical unit receives the forwarded space", -0.47],
              ["support request with the coordinating body guidance.", -0.36],
            ]}
          />
          <AppWindow comments />
        </Step>
        <Step $nudge={-2}>
          <Heading
            n={4}
            shift={-14}
            lines={[
              ["The tactical unit uses the guidance that was sent by the", -0.4],
              ["coordinating body to decide what to assign to the satellite.", -0.32],
            ]}
          />
          <AppWindow comments code="33140"><AssignDialog /></AppWindow>
        </Step>
      </Page>
    </>
  );
}
